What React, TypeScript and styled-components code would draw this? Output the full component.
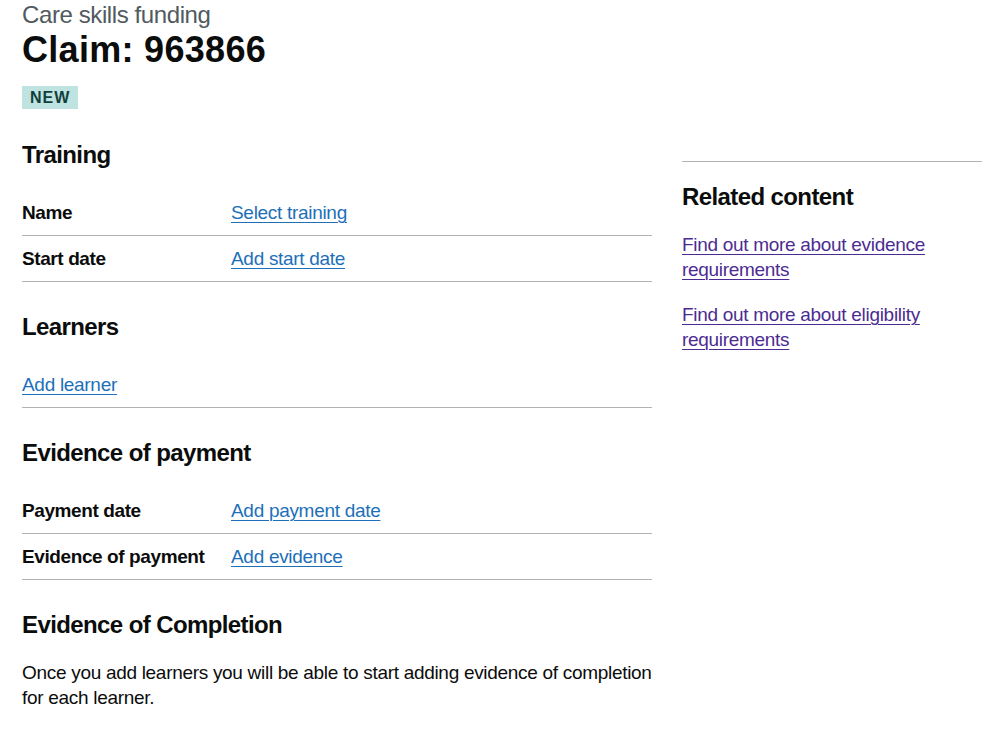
import styled, { createGlobalStyle } from "styled-components";

const GlobalStyle = createGlobalStyle`
  body {
    margin: 0;
    background: #ffffff;
    color: #0b0c0c;
    font-family: "Liberation Sans", Arial, sans-serif;
    -webkit-font-smoothing: antialiased;
  }
`;

const Page = styled.main`
  width: 960px;
  padding: 0 18px 0 22px;
`;

const Caption = styled.span`
  display: block;
  font-size: 24px;
  line-height: 30px;
  letter-spacing: -0.4px;
  color: #505a5f;
`;

const Title = styled.h1`
  margin: 0 0 16px;
  font-size: 36px;
  line-height: 40px;
  font-weight: 700;
  letter-spacing: 0.3px;
`;

const Tag = styled.strong`
  display: inline-block;
  padding: 4px 8px 3px;
  font-size: 16px;
  line-height: 16px;
  font-weight: 700;
  letter-spacing: 1px;
  text-transform: uppercase;
  background: #bfe3e0;
  color: #10403c;
`;

const Header = styled.header`
  margin-bottom: 31px;
`;

const Row = styled.div`
  display: grid;
  grid-template-columns: 630px 300px;
  column-gap: 30px;
  align-items: start;
`;

const Heading = styled.h2`
  margin: 0 0 20px;
  font-size: 24px;
  line-height: 30px;
  font-weight: 700;
  letter-spacing: -0.6px;
`;

const List = styled.dl`
  margin: 0 0 30px;
`;

const ListRow = styled.div`
  display: flex;
  border-bottom: 1px solid #b1b4b6;
`;

const Key = styled.dt`
  flex: 0 0 189px;
  padding: 10px 20px 10px 0;
  font-size: 19px;
  line-height: 25px;
  font-weight: 700;
  letter-spacing: -0.4px;
`;

const Value = styled.dd`
  margin: 0;
  padding: 10px 0;
  font-size: 19px;
  line-height: 25px;
`;

const Link = styled.a<{ $visited?: boolean }>`
  color: ${(p) => (p.$visited ? "#4c2c92" : "#1d70b8")};
  text-decoration: underline;
  text-decoration-thickness: 1px;
  text-underline-offset: 0.16em;
  font-size: 19px;
  line-height: 25px;
  letter-spacing: -0.3px;
`;

const Body = styled.p`
  margin: 0;
  font-size: 19px;
  line-height: 25px;
  letter-spacing: -0.3px;
`;

const Aside = styled.aside`
  margin-top: 21px;
  padding-top: 20px;
  border-top: 1px solid #b1b4b6;
`;

const RelatedList = styled.ul`
  list-style: none;
  margin: 0;
  padding: 0;
  display: flex;
  flex-direction: column;
  gap: 20px;
`;

type Item = { key?: string; label: string };

const Summary = ({ items }: { items: Item[] }) => (
  <List>
    {items.map((it) => (
      <ListRow key={it.label}>
        {it.key && <Key>{it.key}</Key>}
        <Value>
          <Link href="#">{it.label}</Link>
        </Value>
      </ListRow>
    ))}
  </List>
);

export default function App() {
  return (
    <Page>
      <GlobalStyle />
      <Header>
        <Caption>Care skills funding</Caption>
        <Title>Claim: 963866</Title>
        <Tag>New</Tag>
      </Header>
      <Row>
        <div>
          <Heading>Training</Heading>
          <Summary
            items={[
              { key: "Name", label: "Select training" },
              { key: "Start date", label: "Add start date" },
            ]}
          />
          <Heading>Learners</Heading>
          <Summary items={[{ label: "Add learner" }]} />
          <Heading>Evidence of payment</Heading>
          <Summary
            items={[
              { key: "Payment date", label: "Add payment date" },
              { key: "Evidence of payment", label: "Add evidence" },
            ]}
          />
          <Heading>Evidence of Completion</Heading>
          <Body>
            Once you add learners you will be able to start adding evidence of
            completion for each learner.
          </Body>
        </div>
        <Aside>
          <Heading>Related content</Heading>
          <RelatedList>
            <li>
              <Link $visited href="#">
                Find out more about evidence requirements
              </Link>
            </li>
            <li>
              <Link $visited href="#">
                Find out more about eligibility requirements
              </Link>
            </li>
          </RelatedList>
        </Aside>
      </Row>
    </Page>
  );
}
